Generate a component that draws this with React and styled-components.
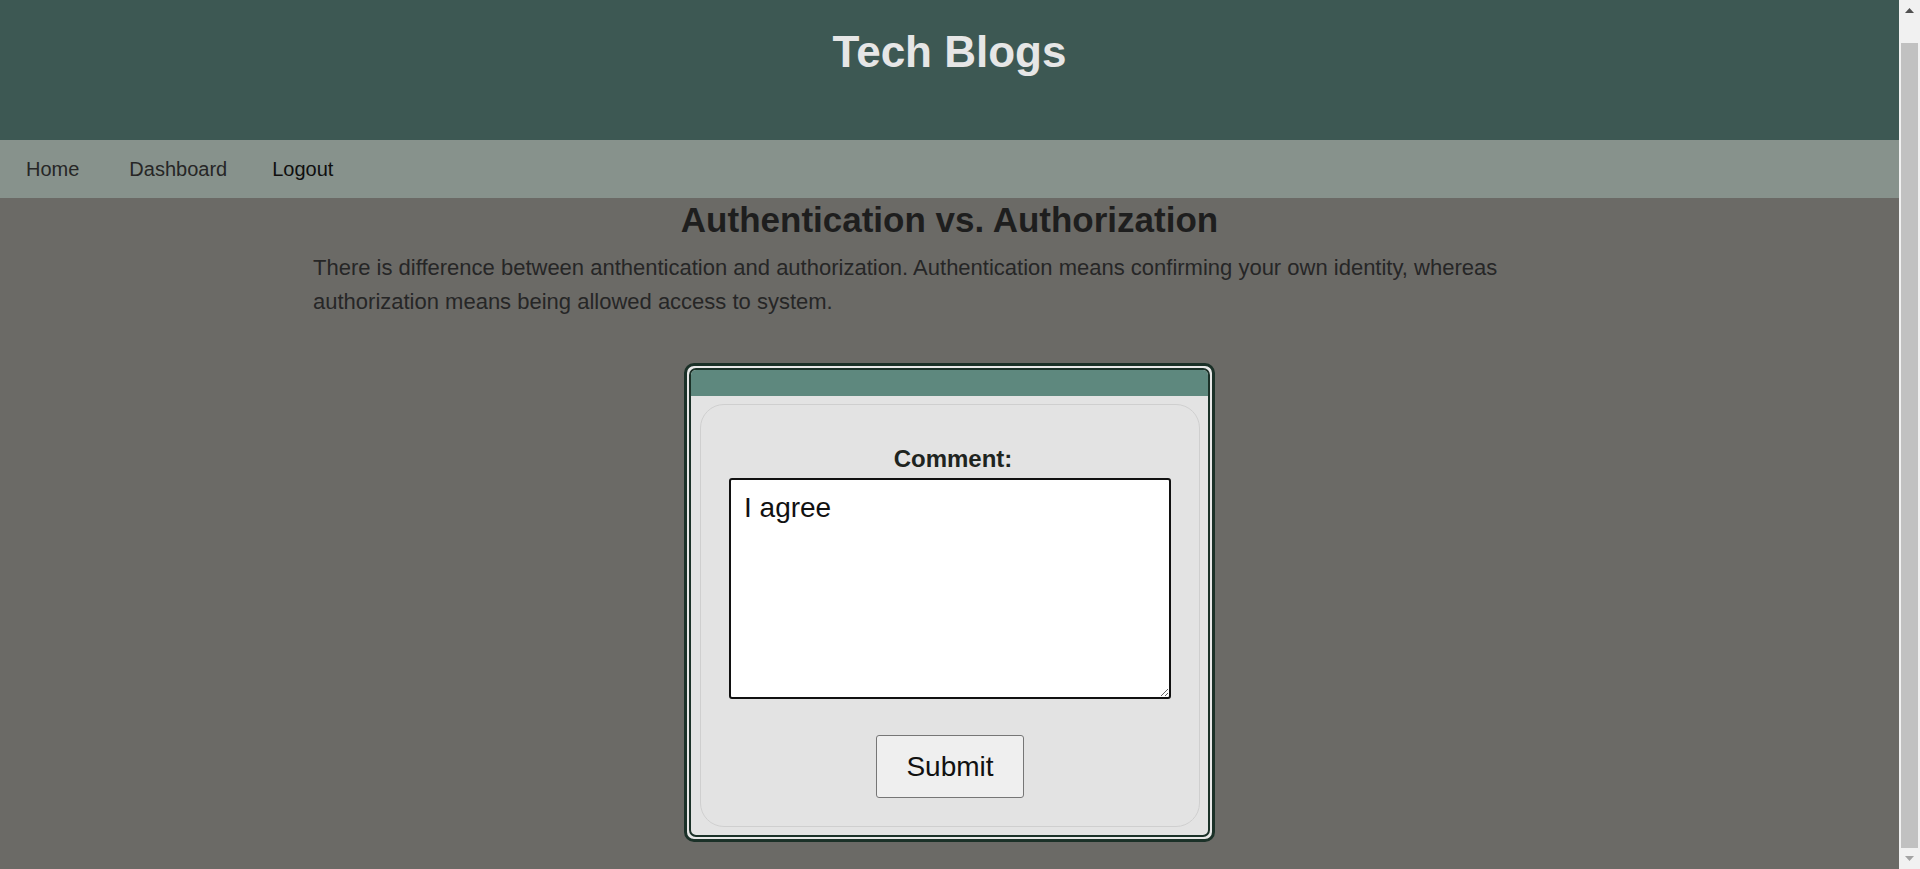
import React from "react";
import styled, { createGlobalStyle } from "styled-components";

const Global = createGlobalStyle`
  html, body {
    margin: 0;
    padding: 0;
    background: #6b6a66;
    font-family: "Liberation Sans", Arial, sans-serif;
  }
  * { box-sizing: border-box; }
`;

const Page = styled.div`
  margin-right: 21px;
  min-height: 869px;
  background: #6b6a66;
  display: flex;
  flex-direction: column;
`;

const Header = styled.header`
  height: 140px;
  background: #3d5853;
  padding-top: 27px;
  text-align: center;
`;

const SiteTitle = styled.h1`
  margin: 0;
  font-size: 44px;
  line-height: 50px;
  font-weight: 700;
  color: #e6e6e6;
`;

const Nav = styled.nav`
  height: 58px;
  background: #87928c;
  display: flex;
  align-items: center;
  padding-left: 1px;
`;

const NavLink = styled.a`
  font-size: 20px;
  line-height: 24px;
  text-decoration: none;
  cursor: pointer;
  color: ${(p) => (p.$strong ? "#0f0f0f" : "#262626")};
  padding: 0 ${(p) => (p.$strong ? "0" : "25px")} 0 ${(p) => (p.$strong ? "20px" : "25px")};
`;

const Main = styled.main`
  flex: 1;
  display: flex;
  flex-direction: column;
  align-items: center;
  padding-bottom: 26px;
`;

const PostTitle = styled.h2`
  margin: 2px 0 0;
  font-size: 35px;
  line-height: 40px;
  font-weight: 700;
  color: #1e1e1e;
  text-align: center;
`;

const PostBody = styled.p`
  margin: 11px 0 0;
  width: 1273px;
  font-size: 22px;
  line-height: 34px;
  color: #262626;
`;

const Card = styled.section`
  margin-top: 44px;
  width: 531px;
  border: 3px solid #1b3128;
  border-radius: 10px;
  padding: 2px;
  background: #e8e8e8;
`;

const CardInner = styled.div`
  border: 2px solid #1b3128;
  border-radius: 7px;
  overflow: hidden;
  background: #e3e3e3;
  padding-bottom: 8px;
`;

const CardBand = styled.div`
  height: 26px;
  background: #5e887e;
`;

const Form = styled.form`
  margin: 8px 8px 0 9px;
  border: 1px solid #cfcfcf;
  border-radius: 24px;
  padding: 40px 0 28px;
  display: flex;
  flex-direction: column;
  align-items: center;
`;

const Label = styled.label`
  font-size: 24px;
  line-height: 28px;
  font-weight: 700;
  color: #1e2420;
  margin-bottom: 5px;
  padding-left: 6px;
`;

const TextArea = styled.textarea`
  display: block;
  width: 442px;
  height: 221px;
  border: 2px solid #111;
  border-radius: 3px;
  padding: 12px 13px 10px;
  font-family: "Liberation Sans", Arial, sans-serif;
  font-size: 28px;
  line-height: 32px;
  color: #111;
  background: #fff;
  outline: none;
`;

const SubmitButton = styled.button`
  margin-top: 36px;
  padding: 15px 29px 14px;
  font-family: "Liberation Sans", Arial, sans-serif;
  font-size: 28px;
  line-height: 32px;
  color: #111;
  background: #efefef;
  border: 1px solid #767676;
  border-radius: 3px;
  cursor: pointer;
`;

/* Browser scrollbar, drawn over the right edge of the viewport */
const ScrollBar = styled.div`
  position: fixed;
  top: 0;
  right: 0;
  width: 21px;
  height: 100vh;
  background: #f1f1f1;
  display: flex;
  flex-direction: column;
`;

const ScrollArrow = styled.div`
  height: 21px;
  flex: none;
  display: flex;
  align-items: center;
  justify-content: center;
`;

const ScrollTrack = styled.div`
  flex: 1;
  padding: 22px 2px 0;
  display: flex;
`;

const ScrollThumb = styled.div`
  flex: 1;
  background: #c1c1c1;
`;

export default function App() {
  return (
    <>
      <Global />
      <Page>
        <Header>
          <SiteTitle>Tech Blogs</SiteTitle>
        </Header>
        <Nav>
          <NavLink href="#">Home</NavLink>
          <NavLink href="#">Dashboard</NavLink>
          <NavLink $strong href="#">Logout</NavLink>
        </Nav>
        <Main>
          <PostTitle>Authentication vs. Authorization</PostTitle>
          <PostBody>
            There is difference between anthentication and authorization. Authentication means
            confirming your own identity, whereas authorization means being allowed access to system.
          </PostBody>
          <Card>
            <CardInner>
              <CardBand />
              <Form onSubmit={(e) => e.preventDefault()}>
                <Label htmlFor="comment">Comment:</Label>
                <TextArea id="comment" defaultValue="I agree" />
                <SubmitButton type="submit">Submit</SubmitButton>
              </Form>
            </CardInner>
          </Card>
        </Main>
      </Page>
      <ScrollBar aria-hidden="true">
        <ScrollArrow>
          <svg width="9" height="5" viewBox="0 0 9 5">
            <path d="M0 5 L4.5 0 L9 5 Z" fill="#505050" />
          </svg>
        </ScrollArrow>
        <ScrollTrack>
          <ScrollThumb />
        </ScrollTrack>
        <ScrollArrow>
          <svg width="9" height="5" viewBox="0 0 9 5">
            <path d="M0 0 L4.5 5 L9 0 Z" fill="#a3a3a3" />
          </svg>
        </ScrollArrow>
      </ScrollBar>
    </>
  );
}
